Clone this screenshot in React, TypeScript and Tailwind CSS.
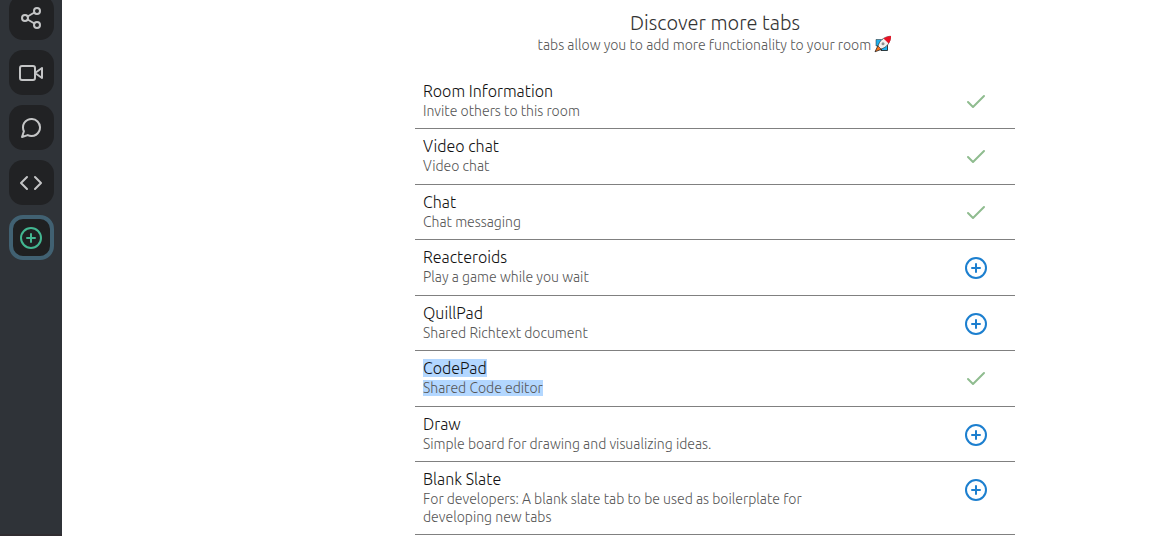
import type { ReactNode } from "react";

type Tab = { name: string; description: string; added: boolean; selected?: boolean };

const tabs: Tab[] = [
  { name: "Room Information", description: "Invite others to this room", added: true },
  { name: "Video chat", description: "Video chat", added: true },
  { name: "Chat", description: "Chat messaging", added: true },
  { name: "Reacteroids", description: "Play a game while you wait", added: false },
  { name: "QuillPad", description: "Shared Richtext document", added: false },
  { name: "CodePad", description: "Shared Code editor", added: true, selected: true },
  { name: "Draw", description: "Simple board for drawing and visualizing ideas.", added: false },
  {
    name: "Blank Slate",
    description: "For developers: A blank slate tab to be used as boilerplate for developing new tabs",
    added: false,
  },
];

function Icon({ children }: { children: ReactNode }) {
  return (
    <svg
      viewBox="0 0 24 24"
      className="size-6 shrink-0"
      fill="none"
      stroke="currentColor"
      strokeWidth="2"
      strokeLinecap="round"
      strokeLinejoin="round"
      aria-hidden="true"
    >
      {children}
    </svg>
  );
}

const ShareIcon = () => (
  <Icon>
    <circle cx="18" cy="5" r="3" />
    <circle cx="6" cy="12" r="3" />
    <circle cx="18" cy="19" r="3" />
    <path d="M8.59 13.51l6.83 3.98M15.41 6.51l-6.82 3.98" />
  </Icon>
);

const VideoIcon = () => (
  <Icon>
    <path d="M23 7l-7 5 7 5V7z" />
    <rect x="1" y="5" width="15" height="14" rx="2" />
  </Icon>
);

const ChatIcon = () => (
  <Icon>
    <path d="M21 11.5a8.38 8.38 0 0 1-.9 3.8 8.5 8.5 0 0 1-7.6 4.7 8.38 8.38 0 0 1-3.8-.9L3 21l1.9-5.7a8.38 8.38 0 0 1-.9-3.8 8.5 8.5 0 0 1 4.7-7.6 8.38 8.38 0 0 1 3.8-.9h.5a8.48 8.48 0 0 1 8 8v.5z" />
  </Icon>
);

const CodeIcon = () => (
  <Icon>
    <path d="M16 18l6-6-6-6M8 6l-6 6 6 6" />
  </Icon>
);

const PlusIcon = () => (
  <Icon>
    <circle cx="12" cy="12" r="10" />
    <path d="M12 8v8M8 12h8" />
  </Icon>
);

const CheckIcon = () => (
  <Icon>
    <path d="M20 6L9 17l-5-5" />
  </Icon>
);

function Rocket() {
  return (
    <svg viewBox="0 0 18 18" className="inline-block size-[18px] align-text-bottom" role="img" aria-label="rocket">
      <path d="M2 4.5h7L5 11H2z" fill="#1fb1ee" stroke="#222" strokeWidth=".5" />
      <path d="M13.500 8v7.500H7L7 12z" fill="#1fb1ee" stroke="#111" strokeWidth=".8" />
      <path d="M4 10.500L1 16.800l6.800-2.600z" fill="#f7731c" stroke="#111" strokeWidth=".7" />
      <path d="M4 11C5.500 6 9 2 16.500 1.200 16.500 8 12.500 12.500 7 14z" fill="#f4f1ee" stroke="#222" strokeWidth=".6" />
      <path d="M9.500 3.400C11.800 1.800 14 1.200 17 1c0 3-.7 5.600-2.400 7.600z" fill="#e81224" />
      <circle cx="9" cy="8.800" r="1.500" fill="#8d8d8d" />
    </svg>
  );
}

const navigation = [
  { label: "Room information", icon: <ShareIcon />, active: false },
  { label: "Video chat", icon: <VideoIcon />, active: false },
  { label: "Chat", icon: <ChatIcon />, active: false },
  { label: "CodePad", icon: <CodeIcon />, active: false },
  { label: "Add tab", icon: <PlusIcon />, active: true },
];

export default function App() {
  return (
    <div className="flex h-screen overflow-hidden bg-white font-['Ubuntu','Noto_Sans',sans-serif] font-light">
      <nav
        aria-label="Room tabs"
        className="flex w-[62px] shrink-0 flex-col items-center gap-2.5 border-b-2 border-[#302d31] bg-[#2f3338]"
      >
        {navigation.map((item, index) => (
          <button
            key={item.label}
            type="button"
            aria-label={item.label}
            className={`flex size-[45px] shrink-0 items-center justify-center rounded-[14px] ${
              index === 0 ? "-mt-[5px]" : ""
            } ${
              item.active ? "border-4 border-[#416172] bg-[#1f2021] text-[#43b791]" : "bg-[#212224] text-[#c4c5c6]"
            }`}
          >
            {item.icon}
          </button>
        ))}
      </nav>

      <main className="min-w-0 flex-1 pt-2.5 pl-[353px]">
        <div className="max-w-[600px]">
          <header className="mb-[19px] text-center">
            <h1 className="text-xl leading-tight text-[#333]">Discover more tabs</h1>
            <p className="text-sm leading-tight text-[#555]">
              tabs allow you to add more functionality to your room <Rocket />
            </p>
          </header>
          <ul>
            {tabs.map((tab) => (
              <li key={tab.name} className="flex justify-between border-b border-[#808080] pt-[7px] pb-2 pl-2 pr-[27px]">
                <div className="w-[410px]">
                  <h2 className="mb-0.5 text-base leading-tight text-[#111]">
                    <span className={tab.selected ? "bg-[#b3d7ff]" : ""}>{tab.name}</span>
                  </h2>
                  <p className="text-sm leading-tight text-[#555]">
                    <span className={tab.selected ? "bg-[#b3d7ff]" : ""}>{tab.description}</span>
                  </p>
                </div>
                {tab.added ? (
                  <span className="mt-[9px] h-6 text-[#8fbc8f]" role="img" aria-label="Added">
                    <CheckIcon />
                  </span>
                ) : (
                  <button type="button" aria-label={`Add ${tab.name}`} className="mt-[9px] h-6 text-[#1c7fcf]">
                    <PlusIcon />
                  </button>
                )}
              </li>
            ))}
          </ul>
        </div>
      </main>
    </div>
  );
}
